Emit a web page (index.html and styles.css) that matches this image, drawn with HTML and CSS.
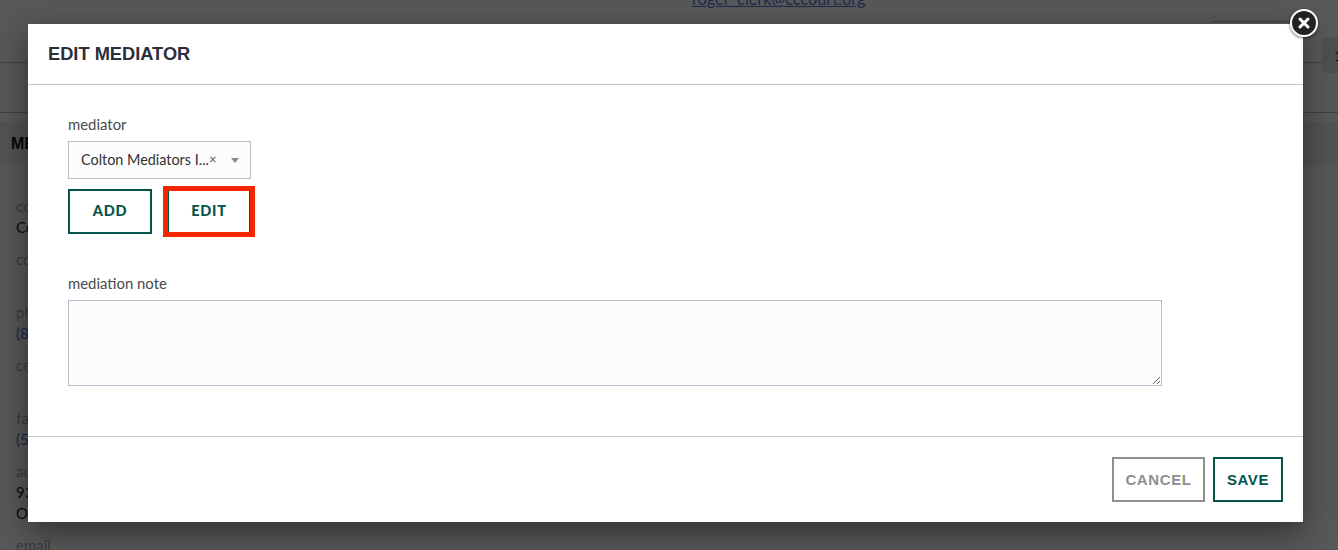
FILE: index.html
```html
<!DOCTYPE html>
<html lang="en">
<head>
<meta charset="utf-8">
<title>Edit mediator</title>
<link rel="stylesheet" href="styles.css">
</head>
<body>
<div class="page">
  <div class="page-top">
    <a class="page-email" href="#">roger_clerk@cccourt.org</a>
    <div class="page-action"></div>
    <div class="page-tab">1</div>
  </div>
  <div class="page-rule"></div>
  <aside class="side">
    <h2 class="side-title">MEDIATOR</h2>
    <div class="side-body">
      <div class="side-field"><div class="side-label">company</div><div class="side-value">Colton Mediators Inc.</div></div>
      <div class="side-field"><div class="side-label">contact</div><div class="side-value">&nbsp;</div></div>
      <div class="side-field"><div class="side-label">phone</div><div class="side-link">(800) 555-0100</div></div>
      <div class="side-field"><div class="side-label">cell</div><div class="side-value">&nbsp;</div></div>
      <div class="side-field"><div class="side-label">fax</div><div class="side-link">(510) 555-0100</div></div>
      <div class="side-field"><div class="side-label">address</div><div class="side-value">930 Main Street</div><div class="side-value">Oakland</div></div>
      <div class="side-field"><div class="side-label">email</div></div>
    </div>
  </aside>
</div>

<div class="overlay"></div>

<div class="modal">
  <header class="modal-head">
    <h1 class="modal-title">EDIT MEDIATOR</h1>
  </header>
  <div class="modal-body">
    <label class="field-label">mediator</label>
    <div class="select">
      <span class="select-text">Colton Mediators I...</span>
      <span class="select-clear">×</span>
      <span class="select-arrow"></span>
    </div>
    <div class="btn-row">
      <button class="btn btn-add" type="button">ADD</button>
      <span class="highlight"><button class="btn btn-edit" type="button">EDIT</button></span>
    </div>
    <label class="field-label note-label">mediation note</label>
    <textarea class="note"></textarea>
  </div>
  <footer class="modal-foot">
    <button class="btn btn-cancel" type="button">CANCEL</button>
    <button class="btn btn-save" type="button">SAVE</button>
  </footer>
  <button class="close" type="button" aria-label="Close">
    <svg viewBox="0 0 12 12" width="12" height="12"><path d="M2 2 L10 10 M10 2 L2 10" stroke="#fff" stroke-width="3" fill="none" stroke-linecap="round"/></svg>
  </button>
</div>
</body>
</html>
```
FILE: styles.css
```css
* { box-sizing: border-box; }
html, body { margin: 0; height: 550px; overflow: hidden; }
body { background: #fff; font-family: Lato, "Liberation Sans", sans-serif; color: #2b2e3c; position: relative; }

.page { height: 550px; overflow: hidden; }
.page-top { height: 63px; border-bottom: 1px solid #bbb; position: relative; }
.page-email { position: absolute; left: 692px; top: -11px; color: #5a78e0; font-size: 16.3px; line-height: 20px; }
.page-action { position: absolute; left: 1211px; top: 21px; width: 80px; border-top: 1px solid #bbb; }
.page-tab { position: absolute; right: 0; top: 38px; width: 16px; height: 35px; background: #e4e4e4; border-radius: 3px 0 0 3px; color: #1c2340; font-size: 14px; line-height: 35px; padding-left: 12px; overflow: hidden; }
.page-rule { height: 50px; border-bottom: 1px solid #bbb; }
.side { margin-top: 9px; }
.side-title { margin: 0; height: 43px; padding-left: 11px; font: bold 16px/43px "Liberation Sans", sans-serif; color: #111; background: #f0f0f0; }
.side-body { padding: 31px 0 0 16px; font-size: 15px; line-height: 21px; }
.side-field { margin-bottom: 11px; }
.side-label { color: #aaa; }
.side-value { color: #222; }
.side-link { color: #4a68d8; }

.overlay { position: absolute; inset: 0; background: rgba(2,0,0,.655); }

.modal { position: absolute; left: 28px; top: 24px; width: 1275px; height: 498px; background: #fff; box-shadow: 0 10px 30px rgba(0,0,0,.45); display: flex; flex-direction: column; }
.modal-head { height: 61px; border-bottom: 1px solid #c4c4c4; padding: 18px 20px 0; }
.modal-title { margin: 0; font: bold 18.25px/24px "Liberation Sans", sans-serif; color: #2b2e3c; }
.modal-body { height: 352px; border-bottom: 1px solid #c4c6cc; padding: 29px 40px 0; display: flex; flex-direction: column; align-items: flex-start; }
.field-label { font-size: 14.9px; line-height: 20px; color: #4a4a4a; }
.select { margin-top: 7px; width: 183px; height: 38px; border: 1px solid #b8bccf; background: #fcfcfd; display: flex; align-items: center; padding: 0 0 2px 12px; font-size: 14.4px; color: #333; position: relative; }
.select-clear { font-size: 13px; color: #555; }
.select-arrow { position: absolute; left: 162px; top: 16px; border-left: 4px solid transparent; border-right: 4px solid transparent; border-top: 5px solid #888; }
.btn-row { margin-top: 7px; display: flex; align-items: center; }
.btn { background: #fff; font: 900 14.5px/1 "Lato", sans-serif; letter-spacing: .7px; padding: 0 0 1px; cursor: pointer; }
.btn-add { width: 84px; height: 45px; border: 2px solid #04544b; color: #04544b; }
.highlight { margin-left: 11px; display: block; border: 5px solid #f72500; width: 92px; height: 51px; }
.btn-edit { display: block; width: 82px; height: 41px; border: solid #04544b; border-width: 0 1px; color: #04544b; }
.note-label { margin-top: 36px; }
.note { margin-top: 7px; width: 1094px; height: 86px; border: 1px solid #b8bccf; background: #fcfcfd; padding: 8px; display: block; font: 14px Lato, sans-serif; }
.modal-foot { flex: 1; display: flex; justify-content: flex-end; align-items: flex-start; gap: 8px; padding: 20px 20px 0 0; }
.btn-cancel, .btn-save { height: 45px; padding: 0; font: bold 15px/1 "Liberation Sans", sans-serif; letter-spacing: .6px; }
.btn-cancel { width: 93px; border: 2px solid #8f8f8f; color: #8f8f8f; }
.btn-save { width: 70px; border: 2px solid #04544b; color: #04544b; }
.close { position: absolute; left: 1262px; top: -15px; width: 28px; height: 28px; border-radius: 50%; border: 2px solid #fff; background: #222; box-shadow: 0 1px 3px rgba(0,0,0,.6); padding: 0; display: flex; align-items: center; justify-content: center; }
```
